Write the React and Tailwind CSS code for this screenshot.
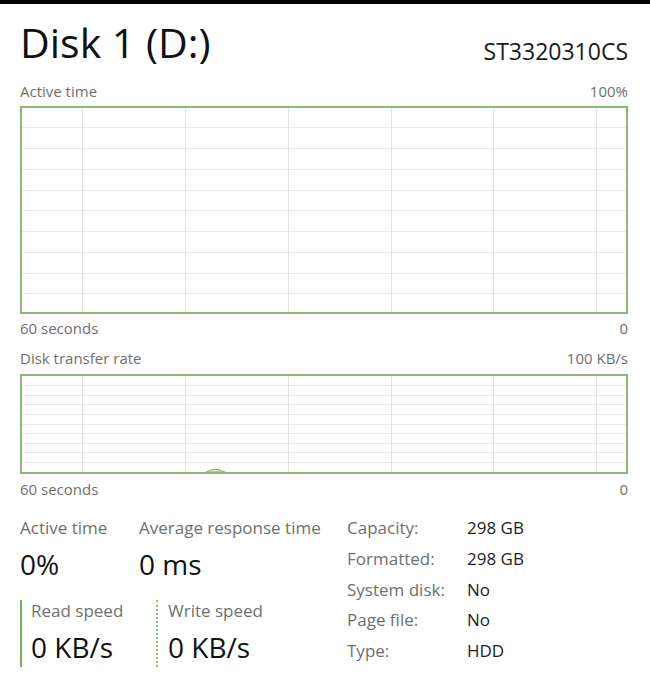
import React from "react";

const font = { fontFamily: '"Open Sans", "Noto Sans", Arial, sans-serif' };

function Chart({ h, innerH, hLines, vLines, children }) {
  return (
    <div className={`border-2 border-[#8fb77c] bg-white ${h}`}>
      <svg
        width="604"
        height={innerH}
        viewBox={`0 0 604 ${innerH}`}
        className="block"
        shapeRendering="crispEdges"
      >
        {hLines.map((y) => (
          <line key={"h" + y} x1="0" x2="604" y1={y + 0.5} y2={y + 0.5} stroke="#e8e8e6" strokeWidth="1" />
        ))}
        {vLines.map((x) => (
          <line key={"v" + x} x1={x + 0.5} x2={x + 0.5} y1="0" y2={innerH} stroke="#e3e3e1" strokeWidth="1" />
        ))}
        {children}
      </svg>
    </div>
  );
}

const V = [60, 163, 266, 369, 471, 574];

export default function App() {
  return (
    <div className="w-[650px] h-[699px] bg-white overflow-hidden" style={font}>
      <div className="h-[4px] bg-black" />
      <div className="pl-[20px] pr-[22px]">
        {/* header */}
        <div className="flex justify-between items-start mt-[14px] h-[48px]">
          <div className="text-[41px] leading-[48px] text-[#111]">Disk 1 (D:)</div>
          <div className="text-[23px] leading-[28px] mt-[19px] text-[#1a1a1a]">ST3320310CS</div>
        </div>

        <div className="flex justify-between mt-[15px] text-[15px] leading-[20px] text-[#6f6f6f]">
          <span>Active time</span>
          <span>100%</span>
        </div>
        <div className="mt-[5px]">
          <Chart h="h-[208px]" innerH={204} hLines={[19, 40, 61, 82, 102, 123, 144, 165, 185]} vLines={V} />
        </div>
        <div className="flex justify-between mt-[4px] text-[15px] leading-[20px] text-[#6f6f6f]">
          <span>60 seconds</span>
          <span>0</span>
        </div>

        <div className="flex justify-between mt-[10px] text-[15px] leading-[20px] text-[#6f6f6f]">
          <span>Disk transfer rate</span>
          <span>100 KB/s</span>
        </div>
        <div className="mt-[6px]">
          <Chart h="h-[100px]" innerH={96} hLines={[9, 19, 28, 38, 48, 57, 67, 76, 86]} vLines={V}>
            <polygon points="184,96 191,93.5 196,93.5 203,96" fill="#dcedd0" stroke="#7fb55f" strokeWidth="1" shapeRendering="geometricPrecision" />
          </Chart>
        </div>
        <div className="flex justify-between mt-[5px] text-[15px] leading-[20px] text-[#6f6f6f]">
          <span>60 seconds</span>
          <span>0</span>
        </div>

        {/* bottom stats */}
        <div className="flex mt-[14px]">
          <div className="w-[327px] pt-[4px]">
            <div className="flex">
              <div className="w-[119px]">
                <div className="text-[17px] leading-[22px] text-[#6f6f6f]">Active time</div>
                <div className="text-[28px] leading-[34px] mt-[8px] text-[#111]">0%</div>
              </div>
              <div>
                <div className="text-[17px] leading-[22px] text-[#6f6f6f]">Average response time</div>
                <div className="text-[28px] leading-[34px] mt-[8px] text-[#111]">0 ms</div>
              </div>
            </div>
            <div className="flex mt-[19px]">
              <div className="w-[136px] border-l-2 border-[#7db257] pl-[9px] pb-[3px]">
                <div className="text-[17px] leading-[22px] text-[#6f6f6f]">Read speed</div>
                <div className="text-[28px] leading-[34px] mt-[8px] text-[#111]">0 KB/s</div>
              </div>
              <div className="border-l-2 border-dotted border-[#93c170] pl-[10px] pb-[3px]">
                <div className="text-[17px] leading-[22px] text-[#6f6f6f]">Write speed</div>
                <div className="text-[28px] leading-[34px] mt-[8px] text-[#111]">0 KB/s</div>
              </div>
            </div>
          </div>
          <div className="grid grid-cols-[120px_auto] text-[17px] leading-[30px]">
            <span className="text-[#6f6f6f]">Capacity:</span>
            <span className="text-[#1e1e1e]">298 GB</span>
            <span className="text-[#6f6f6f]">Formatted:</span>
            <span className="text-[#1e1e1e]">298 GB</span>
            <span className="text-[#6f6f6f]">System disk:</span>
            <span className="text-[#1e1e1e]">No</span>
            <span className="text-[#6f6f6f]">Page file:</span>
            <span className="text-[#1e1e1e]">No</span>
            <span className="text-[#6f6f6f]">Type:</span>
            <span className="text-[#1e1e1e]">HDD</span>
          </div>
        </div>
      </div>
    </div>
  );
}
